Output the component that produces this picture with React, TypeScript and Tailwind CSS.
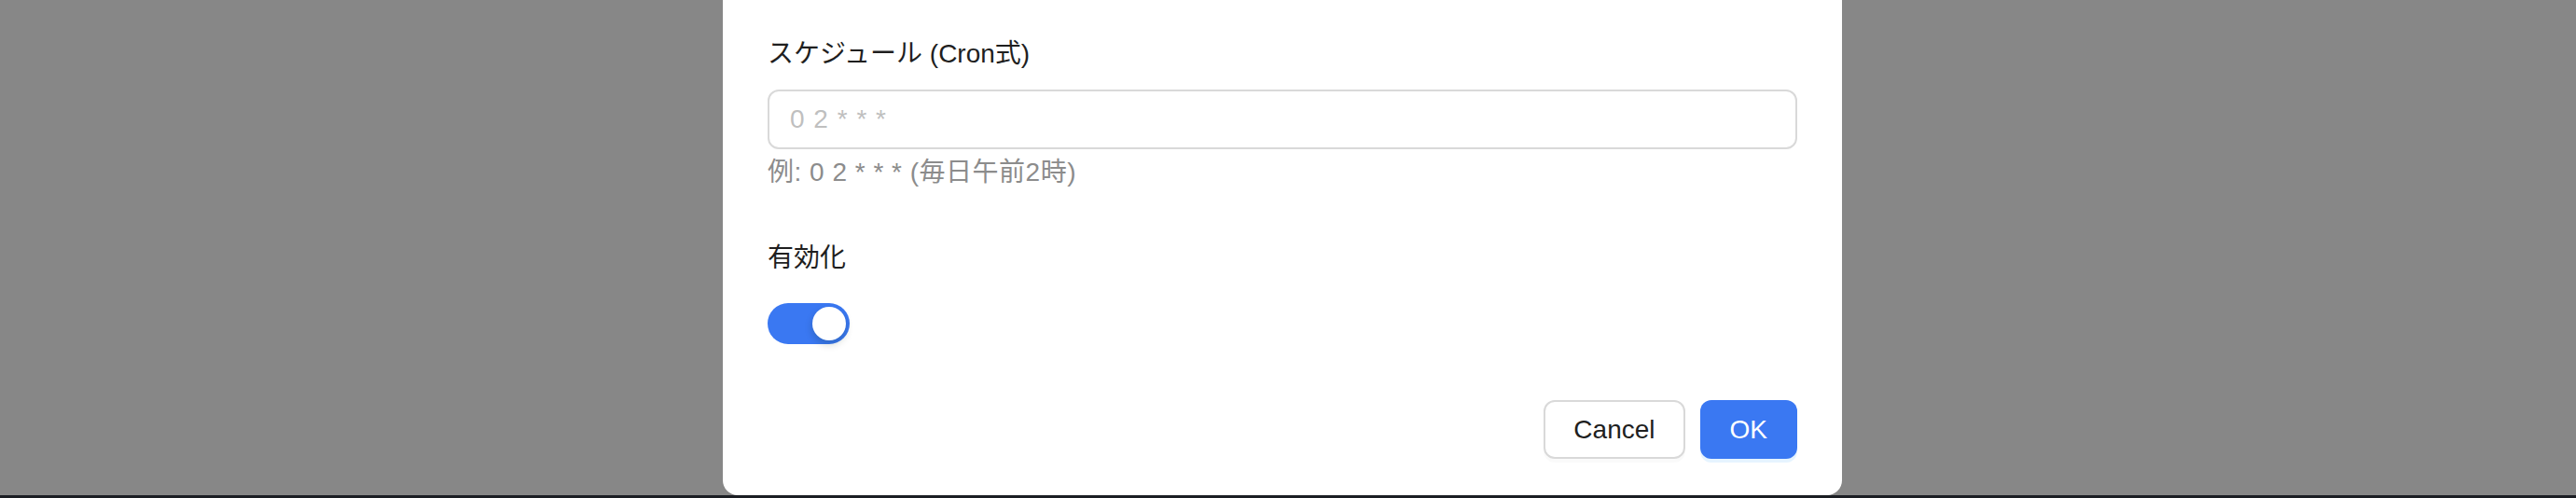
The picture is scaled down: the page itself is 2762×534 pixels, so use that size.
import React, { useState } from 'react';

const font = { fontFamily: '"Liberation Sans", "Noto Sans CJK JP", sans-serif' };

const App: React.FC = () => {
  const [enabled, setEnabled] = useState(true);
  const [cron, setCron] = useState('');

  return (
    <div className="h-[534px] w-full bg-[#878787] flex flex-col overflow-hidden" style={font}>
      <div className="flex-1 min-h-0">
        {/* modal (top is scrolled out of view) */}
        <div className="ml-[775px] w-[1200px] h-full bg-white rounded-b-[16px] px-[48px] pt-[36px] flex flex-col">
          {/* schedule */}
          <label className="h-[44px] leading-[44px] text-[28px] text-[#1f1f1f]">スケジュール (Cron式)</label>
          <input
            type="text"
            value={cron}
            onChange={(e) => setCron(e.target.value)}
            placeholder="0 2 * * *"
            className="mt-[16px] h-[64px] w-full rounded-[12px] border-2 border-[#d9d9d9] px-[22px] text-[28px] tracking-[1px] text-[#1f1f1f] outline-none placeholder:text-[#bfbfbf]"
            style={font}
          />
          <div className="mt-[3px] h-[44px] leading-[44px] text-[28px] tracking-[0.5px] text-[#8c8c8c]">例: 0 2 * * * (毎日午前2時)</div>

          {/* enabled */}
          <label className="mt-[48px] h-[44px] leading-[44px] text-[28px] text-[#1f1f1f]">有効化</label>
          <div className="mt-[16px] h-[64px] flex items-center">
            <button
              type="button"
              onClick={() => setEnabled(!enabled)}
              className={`relative w-[88px] h-[44px] rounded-full ${enabled ? 'bg-[#3a78f2]' : 'bg-[#bfbfbf]'}`}
            >
              <span
                className={`absolute top-[4px] w-[36px] h-[36px] rounded-full bg-white shadow-[0_4px_8px_0_rgba(0,35,11,0.2)] ${enabled ? 'left-[48px]' : 'left-[4px]'}`}
              />
            </button>
          </div>

          {/* footer */}
          <div className="mt-[50px] flex justify-end gap-[16px]">
            <button className="h-[63px] px-[30px] rounded-[12px] border-2 border-[#d9d9d9] bg-white text-[28px] text-[#1f1f1f] shadow-[0_4px_0_rgba(0,0,0,0.02)]">
              Cancel
            </button>
            <button className="h-[63px] px-[32px] rounded-[12px] bg-[#3a78f2] text-[28px] text-white shadow-[0_4px_0_rgba(5,145,255,0.1)]">
              OK
            </button>
          </div>
        </div>
      </div>
      <div className="h-[3px] bg-[#1b1e23]" />
    </div>
  );
};

export default App;
